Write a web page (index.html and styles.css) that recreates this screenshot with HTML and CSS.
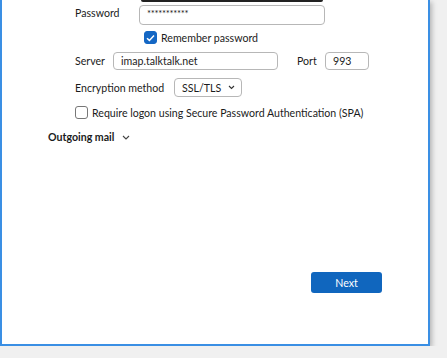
FILE: index.html
```html
<!DOCTYPE html>
<html lang="en">

<head>
    <meta charset="UTF-8">
    <title>Account settings</title>
    <link rel="stylesheet" href="styles.css">
</head>

<body>
    <div class="dialog">
        <div class="top-field"></div>

        <div class="row password-row">
            <label class="label password-label">Password</label>
            <div class="input password-input">***********</div>
        </div>

        <label class="check remember">
            <span class="box checked">
                <svg width="9" height="8" viewBox="0 0 9 8">
                    <polyline points="1,4.2 3.4,6.4 8,1.6" fill="none" stroke="#fff" stroke-width="1.5" />
                </svg>
            </span>
            Remember password
        </label>

        <div class="row server-row">
            <label class="label server-label">Server</label>
            <div class="input server-input">imap.talktalk.net</div>
            <label class="label port-label">Port</label>
            <div class="input port-input">993</div>
        </div>

        <div class="row encryption-row">
            <label class="label encryption-label">Encryption method</label>
            <div class="input select">
                SSL/TLS
                <svg class="chevron" width="7" height="5" viewBox="0 0 7 5">
                    <polyline points="1,1 3.5,3.5 6,1" fill="none" stroke="#333" stroke-width="1.1" />
                </svg>
            </div>
        </div>

        <label class="check spa">
            <span class="box"></span>
            Require logon using Secure Password Authentication (SPA)
        </label>

        <div class="section-title">
            Outgoing mail
            <svg class="chevron" width="8" height="5" viewBox="0 0 8 5">
                <polyline points="1,1 4,4 7,1" fill="none" stroke="#444" stroke-width="1.1" />
            </svg>
        </div>

        <div class="actions">
            <button class="next-button" type="button">Next</button>
        </div>
    </div>
</body>

</html>
```

FILE: styles.css
```css
body {
    margin: 0;
    background-color: #f0f0f0;
    font-family: Lato, 'Noto Sans', Arial, sans-serif;
    font-size: 10.6px;
    color: #1b1b1b;
}

.dialog {
    width: 426px;
    height: 344px;
    background-color: #fff;
    border: 2px solid #3a8fe4;
    border-top: none;
    box-shadow: 2px 2px 5px rgba(0, 0, 0, 0.25);
    display: flex;
    flex-direction: column;
}

.top-field {
    width: 182px;
    height: 2px;
    margin-left: 139px;
    background-color: #222;
    border-radius: 0 0 2px 2px;
}

.row {
    display: flex;
    align-items: center;
    padding-left: 73px;
}

.label {
    white-space: nowrap;
}

.input {
    box-sizing: border-box;
    border: 1px solid #b7b7b7;
    border-radius: 4px;
    background-color: #fff;
    display: flex;
    align-items: center;
    padding-left: 7px;
}

.password-row {
    margin-top: 3px;
    height: 20px;
    align-items: flex-start;
}

.password-label {
    width: 64px;
    padding-top: 2px;
}

.password-input {
    width: 186px;
    height: 20px;
    align-items: flex-start;
    padding-top: 2px;
    letter-spacing: -0.3px;
    font-size: 9.5px;
}

.check {
    display: flex;
    align-items: center;
    gap: 4px;
}

.box {
    box-sizing: border-box;
    width: 13px;
    height: 13px;
    border: 1px solid #777;
    border-radius: 3px;
    display: flex;
    align-items: center;
    justify-content: center;
}

.box.checked {
    background-color: #1467c4;
    border-color: #1467c4;
}

.remember {
    margin-top: 6px;
    margin-left: 142px;
}

.server-row {
    margin-top: 8px;
    height: 18px;
}

.server-label {
    width: 38px;
}

.server-input {
    width: 165px;
    height: 18px;
}

.port-label {
    width: 28px;
    margin-left: 19px;
}

.port-input {
    width: 44px;
    height: 18px;
}

.encryption-row {
    margin-top: 8px;
    height: 19px;
}

.encryption-label {
    width: 99px;
}

.select {
    width: 68px;
    height: 19px;
    justify-content: space-between;
    padding-right: 6px;
}

.spa {
    margin-top: 9px;
    margin-left: 73px;
}

.section-title {
    margin-top: 12px;
    margin-left: 46px;
    font-weight: bold;
    display: flex;
    align-items: center;
    gap: 8px;
}

.actions {
    margin-top: auto;
    margin-bottom: 51px;
    display: flex;
    justify-content: flex-end;
    padding-right: 46px;
}

.next-button {
    width: 71px;
    height: 21px;
    border: none;
    border-radius: 3px;
    background-color: #1066be;
    color: #fff;
    font-family: inherit;
    font-size: 10.6px;
}
```
